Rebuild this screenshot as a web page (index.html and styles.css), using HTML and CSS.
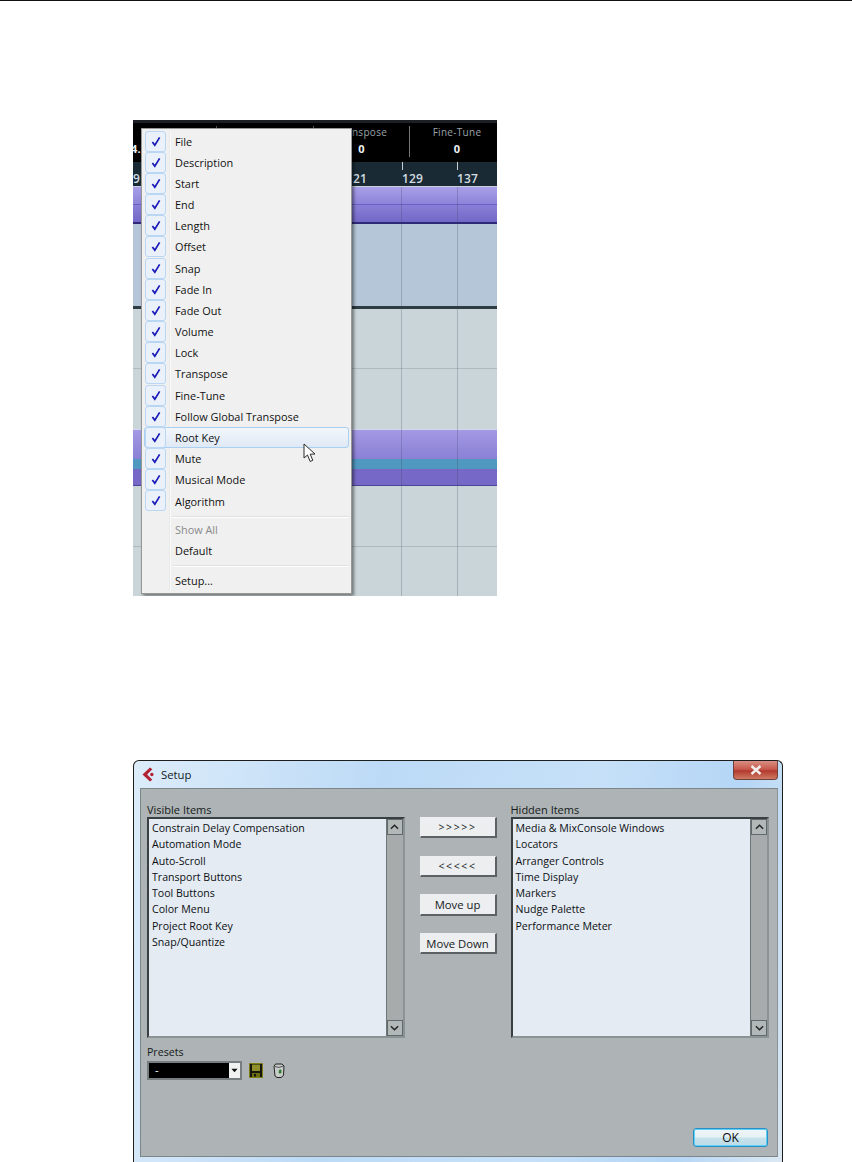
FILE: index.html
```html
<!DOCTYPE html>
<html lang="en">
<head>
<meta charset="utf-8">
<title>Setup</title>
<link rel="stylesheet" href="styles.css">
</head>
<body>
<div class="rule"></div>

<section class="daw">
  <div class="hdr">
    <div class="hdr-cell hdr-a"></div>
    <div class="hdr-cell hdr-b"><span class="hdr-num hdr-left">4.</span></div>
    <div class="hdr-cell hdr-c"><span class="hdr-label">Transpose</span><span class="hdr-val">0</span></div>
    <div class="hdr-cell hdr-d"><span class="hdr-label">Fine-Tune</span><span class="hdr-val">0</span></div>
  </div>
  <div class="ruler">
    <span class="bar bar-9">9</span>
    <span class="bar bar-121">121</span>
    <span class="bar bar-129">129</span>
    <span class="bar bar-137">137</span>
  </div>
  <div class="track purple-a"><div class="pa1"></div><div class="pa2"></div></div>
  <div class="track lane-blue"></div>
  <div class="track divider"></div>
  <div class="track lane-grey lg1"></div>
  <div class="track lane-grey lg2"></div>
  <div class="track purple-b"><div class="pb1"></div><div class="pb2"></div><div class="pb3"></div></div>
  <div class="track lane-grey lg3"></div>
  <div class="track lane-grey lg4"></div>
  <div class="gridline gl-1"></div>
  <div class="gridline gl-2"></div>

  <div class="menu">
    <ul class="menu-list">
      <li class="mi"><span class="chk"><svg viewBox="0 0 11 12"><path d="M1.5 6.5 L4.2 10 L9.5 1.5"/></svg></span>File</li>
      <li class="mi"><span class="chk"><svg viewBox="0 0 11 12"><path d="M1.5 6.5 L4.2 10 L9.5 1.5"/></svg></span>Description</li>
      <li class="mi"><span class="chk"><svg viewBox="0 0 11 12"><path d="M1.5 6.5 L4.2 10 L9.5 1.5"/></svg></span>Start</li>
      <li class="mi"><span class="chk"><svg viewBox="0 0 11 12"><path d="M1.5 6.5 L4.2 10 L9.5 1.5"/></svg></span>End</li>
      <li class="mi"><span class="chk"><svg viewBox="0 0 11 12"><path d="M1.5 6.5 L4.2 10 L9.5 1.5"/></svg></span>Length</li>
      <li class="mi"><span class="chk"><svg viewBox="0 0 11 12"><path d="M1.5 6.5 L4.2 10 L9.5 1.5"/></svg></span>Offset</li>
      <li class="mi"><span class="chk"><svg viewBox="0 0 11 12"><path d="M1.5 6.5 L4.2 10 L9.5 1.5"/></svg></span>Snap</li>
      <li class="mi"><span class="chk"><svg viewBox="0 0 11 12"><path d="M1.5 6.5 L4.2 10 L9.5 1.5"/></svg></span>Fade In</li>
      <li class="mi"><span class="chk"><svg viewBox="0 0 11 12"><path d="M1.5 6.5 L4.2 10 L9.5 1.5"/></svg></span>Fade Out</li>
      <li class="mi"><span class="chk"><svg viewBox="0 0 11 12"><path d="M1.5 6.5 L4.2 10 L9.5 1.5"/></svg></span>Volume</li>
      <li class="mi"><span class="chk"><svg viewBox="0 0 11 12"><path d="M1.5 6.5 L4.2 10 L9.5 1.5"/></svg></span>Lock</li>
      <li class="mi"><span class="chk"><svg viewBox="0 0 11 12"><path d="M1.5 6.5 L4.2 10 L9.5 1.5"/></svg></span>Transpose</li>
      <li class="mi"><span class="chk"><svg viewBox="0 0 11 12"><path d="M1.5 6.5 L4.2 10 L9.5 1.5"/></svg></span>Fine-Tune</li>
      <li class="mi"><span class="chk"><svg viewBox="0 0 11 12"><path d="M1.5 6.5 L4.2 10 L9.5 1.5"/></svg></span>Follow Global Transpose</li>
      <li class="mi mi-hover"><span class="chk"><svg viewBox="0 0 11 12"><path d="M1.5 6.5 L4.2 10 L9.5 1.5"/></svg></span>Root Key</li>
      <li class="mi"><span class="chk"><svg viewBox="0 0 11 12"><path d="M1.5 6.5 L4.2 10 L9.5 1.5"/></svg></span>Mute</li>
      <li class="mi"><span class="chk"><svg viewBox="0 0 11 12"><path d="M1.5 6.5 L4.2 10 L9.5 1.5"/></svg></span>Musical Mode</li>
      <li class="mi"><span class="chk"><svg viewBox="0 0 11 12"><path d="M1.5 6.5 L4.2 10 L9.5 1.5"/></svg></span>Algorithm</li>
    </ul>
    <div class="sep sep-a"></div>
    <ul class="menu-list">
      <li class="mi mi-plain mi-off">Show All</li>
      <li class="mi mi-plain">Default</li>
    </ul>
    <div class="sep sep-b"></div>
    <ul class="menu-list">
      <li class="mi mi-plain">Setup...</li>
    </ul>
  </div>
  <svg class="cursor" viewBox="0 0 14 20"><path d="M1 1 L1 15 L4.5 12 L7.2 18.5 L9.8 17.3 L7.2 11.2 L12 11 Z"/></svg>
</section>

<section class="dialog">
  <header class="titlebar">
    <svg class="logo" viewBox="0 0 16 16"><path d="M8.5 0.5 L11 2.5 L5.5 8 L11 13.5 L8.5 15.5 L0.5 8 Z"/><circle cx="10.5" cy="8" r="1.8"/></svg>
    <span class="title">Setup</span>
    <span class="close"><svg viewBox="0 0 12 10"><path d="M1.5 1 L10.5 9 M10.5 1 L1.5 9"/></svg></span>
  </header>
  <div class="panel">
    <div class="columns">
      <div class="col">
        <div class="label">Visible Items</div>
        <div class="listbox">
          <ul class="items">
            <li>Constrain Delay Compensation</li>
            <li>Automation Mode</li>
            <li>Auto-Scroll</li>
            <li>Transport Buttons</li>
            <li>Tool Buttons</li>
            <li>Color Menu</li>
            <li>Project Root Key</li>
            <li>Snap/Quantize</li>
          </ul>
          <div class="scroll">
            <span class="sbtn"><svg viewBox="0 0 10 6"><path d="M1 5 L5 1 L9 5"/></svg></span>
            <span class="strack"></span>
            <span class="sbtn"><svg viewBox="0 0 10 6"><path d="M1 1 L5 5 L9 1"/></svg></span>
          </div>
        </div>
      </div>
      <div class="btns">
        <button class="btn btn-1">&gt;&gt;&gt;&gt;&gt;</button>
        <button class="btn btn-2">&lt;&lt;&lt;&lt;&lt;</button>
        <button class="btn btn-3">Move up</button>
        <button class="btn btn-4">Move Down</button>
      </div>
      <div class="col col-r">
        <div class="label">Hidden Items</div>
        <div class="listbox">
          <ul class="items">
            <li>Media &amp; MixConsole Windows</li>
            <li>Locators</li>
            <li>Arranger Controls</li>
            <li>Time Display</li>
            <li>Markers</li>
            <li>Nudge Palette</li>
            <li>Performance Meter</li>
          </ul>
          <div class="scroll">
            <span class="sbtn"><svg viewBox="0 0 10 6"><path d="M1 5 L5 1 L9 5"/></svg></span>
            <span class="strack"></span>
            <span class="sbtn"><svg viewBox="0 0 10 6"><path d="M1 1 L5 5 L9 1"/></svg></span>
          </div>
        </div>
      </div>
    </div>
    <div class="presets">
      <div class="label label-p">Presets</div>
      <div class="preset-row">
        <div class="combo"><span class="combo-val">-</span><span class="combo-btn"><svg viewBox="0 0 8 5"><path d="M0.5 0.5 H7.5 L4 4.5 Z"/></svg></span></div>
        <svg class="save" viewBox="0 0 14 15"><path class="s-body" d="M0.5 0.5 H13.5 V14.5 H0.5 Z"/><path class="s-top" d="M3 1.5 H11 V8 H3 Z"/><path class="s-bot" d="M3 10 H11 V14 H3 Z"/><path class="s-hole" d="M5 11 H7 V13.5 H5 Z"/></svg>
        <svg class="trash" viewBox="0 0 12 15"><path class="t-can" d="M2.5 1 H9 L11 3 L10.5 12.5 L8 14.5 H4 L2 13 L1 3.5 Z"/><path class="t-lid" d="M1.5 3.5 Q6 5.5 10.5 3"/><path class="t-mark" d="M6.5 7 H8 V10 H6 Z"/></svg>
      </div>
    </div>
    <div class="foot"><button class="ok">OK</button></div>
  </div>
</section>
</body>
</html>
```

FILE: styles.css
```css
* { box-sizing: border-box; }
html, body { margin: 0; padding: 0; }
body {
  width: 852px;
  height: 1162px;
  overflow: hidden;
  background: #fff;
  font-family: "Open Sans", "Noto Sans", sans-serif;
  color: #000;
}
ul { list-style: none; margin: 0; padding: 0; }
.rule { height: 1px; background: #111; }

/* ---------- first figure ---------- */
.daw {
  position: relative;
  width: 364px;
  height: 476px;
  margin: 119px 0 0 133px;
  overflow: hidden;
  background: #c9d5d9;
}
.hdr {
  height: 42px;
  background: #000;
  border-top: 3px solid #1c1f24;
  display: flex;
  padding-top: 3px;
}
.hdr-cell {
  flex: none;
  height: 31px;
  display: flex;
  flex-direction: column;
  align-items: center;
  position: relative;
  color: #9aa3a8;
  font-size: 10px;
  letter-spacing: .3px;
  line-height: 12px;
}
.hdr-a { width: 83px; }
.hdr-b { width: 97px; border-left: 1px solid #555; }
.hdr-c { width: 96px; border-left: 1px solid #555; }
.hdr-d { width: 95px; border-left: 1px solid #777; }
.hdr-c .hdr-label { white-space: nowrap; }
.hdr-val { color: #eef2f4; font-weight: 700; font-size: 11px; line-height: 22px; }
.hdr-num { color: #eef2f4; font-weight: 700; font-size: 11px; }
.hdr-left { position: absolute; left: -86px; top: 17px; }

.ruler {
  height: 25px;
  background: #1a2a34;
  position: relative;
  color: #d3dde2;
  font-size: 12px;
  font-weight: 600;
  border-bottom: 1px solid #c9cfe0;
}
.bar { position: absolute; top: 9px; line-height: 16px; letter-spacing: .2px; }
.bar::before {
  content: "";
  position: absolute;
  left: 0;
  top: -9px;
  height: 8px;
  width: 1px;
  background: #c8d0d4;
}
.bar-9 { left: 0; }
.bar-9::before, .bar-121::before { display: none; }
.bar-121 { left: 213px; }
.bar-129 { left: 269px; }
.bar-137 { left: 324px; }

.purple-a { height: 37px; border-bottom: 2px solid #2e2a78; }
.pa1 { height: 18px; background: linear-gradient(#a89fe8, #8d84da); border-bottom: 1px solid #6a5fc4; }
.pa2 { height: 17px; background: linear-gradient(#8a80d8, #7267c6); }
.lane-blue { height: 82px; background-color: #b5c6d8; }
.divider { height: 3px; background-color: #2f3c44; }
.lane-grey { background-color: #c9d5d9; }
.lg1 { height: 60px; border-bottom: 1px solid #aebabe; }
.lg2 { height: 60px; }
.purple-b { height: 57px; border-top: 1px solid #d5d8ec; border-bottom: 1px solid #4a4596; }
.pb1 { height: 29px; background: linear-gradient(#a399e4, #8a80d6); }
.pb2 { height: 10px; background: #5098c0; }
.pb3 { height: 16px; background: #7568c6; }
.lg3 { height: 61px; border-bottom: 1px solid #aebabe; }
.lg4 { height: 49px; }
.gridline {
  position: absolute;
  top: 67px;
  bottom: 0;
  width: 1px;
  background: rgba(60, 70, 85, .26);
}
.gl-1 { left: 268px; }
.gl-2 { left: 324px; }

.menu {
  position: absolute;
  left: 8px;
  top: 8px;
  width: 211px;
  height: 466px;
  background: #f0f0f0;
  border: 1px solid #979797;
  box-shadow: 2px 2px 3px rgba(0,0,0,.45);
  padding: 1.5px 2px 2px;
  font-size: 10.9px;
  color: #101010;
}
.menu::before {
  content: "";
  position: absolute;
  left: 27px;
  top: 2px;
  bottom: 2px;
  width: 2px;
  background: linear-gradient(90deg, #e2e3e3, #fff);
}
.mi {
  position: relative;
  height: 21.18px;
  display: flex;
  align-items: center;
  padding-left: 31px;
  white-space: nowrap;
}
.mi-off { color: #8a8a8a; }
.mi-hover { z-index: 0; }
.mi-hover::before {
  content: "";
  position: absolute;
  z-index: -1;
  left: 0;
  right: 0;
  top: 0;
  bottom: 0;
  border: 1px solid #a9d0f2;
  border-radius: 3px;
  background: linear-gradient(#f2f6fb, #dfe9f5);
}
.chk {
  position: absolute;
  left: 1px;
  top: 0;
  width: 21px;
  height: 21px;
  border: 1px solid #b9d6f3;
  border-radius: 3px;
  background: #eaf1fb;
  display: flex;
  align-items: center;
  justify-content: center;
}
.chk svg { width: 10px; height: 11px; }
.chk path { fill: none; stroke: #1a1ab8; stroke-width: 1.9; }
.sep { height: 2px; margin-left: 29px; background: #e0e0e0; border-bottom: 1px solid #fff; }
.sep-a { margin-top: 4px; margin-bottom: 1.5px; }
.sep-b { margin-top: 4px; margin-bottom: 2px; }

.cursor {
  position: absolute;
  left: 170px;
  top: 323px;
  width: 14px;
  height: 20px;
}
.cursor path { fill: #fff; stroke: #2a2a2a; stroke-width: 1; stroke-linejoin: miter; }

/* ---------- dialog ---------- */
.dialog {
  width: 650px;
  height: 402px;
  margin: 164px 0 0 133px;
  border: 1px solid #1e1e1e;
  border-bottom: 0;
  border-radius: 6px 6px 0 0;
  background: linear-gradient(100deg, #dcecfa 0%, #bcdaf6 35%, #c6e0f8 65%, #b5d6f6 85%, #dbe8f3 100%);
  padding: 0 4px 5px 6px;
  display: flex;
  flex-direction: column;
}
.titlebar {
  position: relative;
  height: 27px;
  display: flex;
  align-items: center;
  flex: none;
  font-size: 11.3px;
}
.logo { width: 15px; height: 15px; margin-left: 2px; margin-right: 3px; }
.logo path, .logo circle { fill: #b32233; }
.title { color: #10181f; margin-left: 1px; }
.close {
  position: absolute;
  right: 0;
  top: 0;
  width: 45px;
  height: 19px;
  border: 1px solid #70403c;
  border-top: 0;
  border-radius: 0 0 4px 4px;
  background: linear-gradient(#d98f83 0%, #c9594e 45%, #b13a2f 55%, #cf7a63 100%);
  display: flex;
  align-items: center;
  justify-content: center;
}
.close svg { width: 12px; height: 10px; }
.close path { stroke: #f2f0ee; stroke-width: 2.4; fill: none; }

.panel {
  flex: 1;
  background: #aeb4b5;
  border: 1px solid #7c8587;
  border-right-color: #8a9294;
  display: flex;
  flex-direction: column;
  padding: 13px 8px 9px 6px;
  font-size: 11.3px;
  position: relative;
}
.columns { display: flex; }
.col { width: 258px; }
.col-r { width: 259px; margin-left: 14px; }
.label { height: 15px; line-height: 15px; color: #15191b; white-space: nowrap; font-size: 11px; }
.listbox {
  height: 221px;
  border: 2px solid #3a3f42;
  border-right-color: #8c9395;
  border-bottom-color: #8c9395;
  background: #e4ebf2;
  display: flex;
  position: relative;
}
.items { flex: 1; padding: 1px 0 0 3px; font-size: 10.6px; }
.items li { height: 16.25px; line-height: 16.25px; color: #0d1014; font-weight: 500; white-space: nowrap; }
.scroll {
  width: 17px;
  background: #a7abac;
  display: flex;
  flex-direction: column;
  border-left: 1px solid #6f7678;
}
.strack { flex: 1; }
.sbtn {
  height: 16px;
  background: #b2b7b8;
  border: 1px solid #62696b;
  display: flex;
  align-items: center;
  justify-content: center;
}
.sbtn svg { width: 9px; height: 6px; }
.sbtn path { fill: none; stroke: #222; stroke-width: 1.6; }
.btns { width: 77px; margin-left: 15px; display: flex; flex-direction: column; padding-top: 15px; }
.btn {
  width: 77px;
  height: 21px;
  padding: 0;
  background: #eceeef;
  border: 1px solid #eceeef;
  border-right: 2px solid #5c6264;
  border-bottom: 2px solid #5c6264;
  font: inherit;
  color: #15191b;
  white-space: nowrap;
}
.btn-1, .btn-2 { letter-spacing: 1.6px; font-size: 10.5px; }
.btn-2 { margin-top: 18px; }
.btn-3 { margin-top: 17px; height: 22px; }
.btn-4 { margin-top: 17px; }

.presets { margin-top: 7px; }
.label-p { height: 14px; line-height: 14px; font-size: 10.6px; }
.preset-row { display: flex; align-items: center; height: 20px; margin-top: 1px; }
.combo {
  width: 95px;
  height: 19px;
  background: #000;
  border: 2px solid #767e80;
  display: flex;
  align-items: center;
  justify-content: space-between;
  color: #fff;
}
.combo-val { margin-left: 6px; line-height: 12px; }
.combo-btn { width: 11px; height: 15px; background: #f0f2f2; display: flex; align-items: center; justify-content: center; }
.combo-btn svg { width: 7px; height: 5px; }
.combo-btn path { fill: #111; }
.save { width: 14px; height: 15px; margin-left: 7px; }
.s-body { fill: #16160a; stroke: #7e7e14; }
.s-top { fill: #8f8f2e; }
.s-bot { fill: #6c6c12; }
.s-hole { fill: #111; }
.trash { width: 12px; height: 15px; margin-left: 10px; }
.t-can { fill: #c7cbc9; stroke: #222; stroke-width: 1; }
.t-lid { fill: none; stroke: #333; stroke-width: .8; }
.t-mark { fill: #3a9a3a; stroke: #0c5a0c; stroke-width: .6; }
.foot { margin-top: auto; display: flex; justify-content: flex-end; }
.ok {
  width: 75px;
  height: 19px;
  padding: 0;
  margin-right: 1px;
  border: 1px solid #2a8fc6;
  border-radius: 3px;
  box-shadow: inset 0 0 0 1px #5fd0f5;
  background: linear-gradient(#f0f6f9 0%, #e6f1f6 45%, #c6e2ec 55%, #bcdce8 100%);
  font: inherit;
  font-size: 12px;
  color: #0a0a0a;
}
```
